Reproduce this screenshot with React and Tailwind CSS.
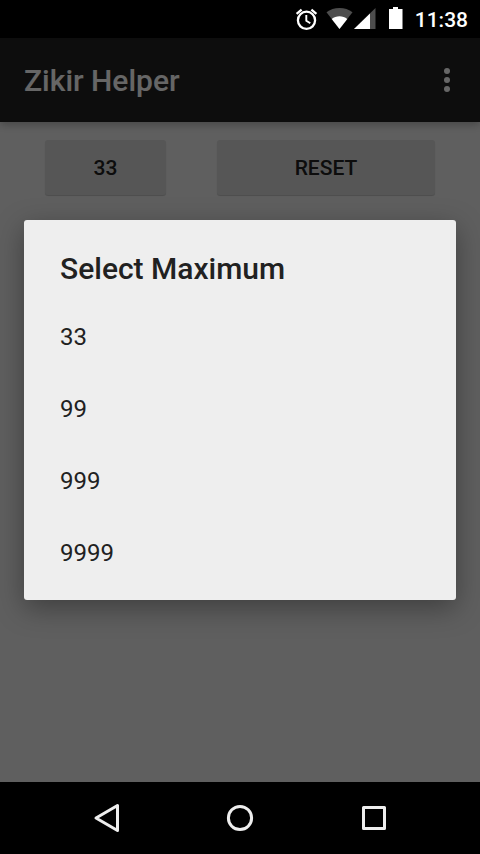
import { useState } from 'react';

const MAX_OPTIONS = [33, 99, 999, 9999];

function StatusBar() {
  return (
    <div className="flex h-[38px] shrink-0 items-center justify-end bg-black pr-3 text-white">
      {/* Alarm */}
      <svg className="mr-2 h-6 w-6" viewBox="0 0 24 24" fill="none" stroke="currentColor">
        <circle cx="12.5" cy="13.3" r="8.600" strokeWidth="2.300" />
        <path d="M12.300 8v5.700l4 2.500" strokeWidth="1.900" />
        <path d="M2.600 6.800l5-4.200M22.400 6.800l-5-4.200" strokeWidth="2.300" />
      </svg>
      {/* Wifi */}
      <svg className="h-6 w-[27px]" viewBox="0 0 27 24" fill="currentColor">
        <path d="M13.500 22L.5 5.300C4 2.500 8.600 1 13.500 1s9.500 1.500 13 4.300z" opacity="0.3" />
        <path d="M13.500 22L5.700 12C7.900 10.100 10.600 9.200 13.500 9.200s5.600.9 7.800 2.800z" />
      </svg>
      {/* Mobile signal */}
      <svg className="mr-3 ml-px h-6 w-[22px]" viewBox="0 0 22 24" fill="currentColor">
        <path d="M0 22L21.500 1v21z" opacity="0.3" />
        <path d="M0 22L16 6.400V22z" />
      </svg>
      {/* Battery */}
      <svg className="mr-3 h-6 w-[15px]" viewBox="0 0 15 24" fill="currentColor">
        <path d="M5 0h5v2h4.500v20H1V2h4z" />
      </svg>
      <span className="pt-0.5 text-[21px] leading-6 font-medium">11:38</span>
    </div>
  );
}

function AppBar() {
  return (
    <header className="z-0 flex h-[84px] shrink-0 items-center justify-between bg-[#212121] pr-[23px] pl-6 text-white shadow-[0_3px_8px_rgba(0,0,0,0.25)]">
      <h1 className="pt-0.5 text-[30px] leading-9 font-medium">Zikir Helper</h1>
      <button type="button" aria-label="More options">
        <svg className="h-6 w-5" viewBox="0 0 20 24" fill="currentColor">
          <circle cx="10" cy="3" r="3" />
          <circle cx="10" cy="12" r="3" />
          <circle cx="10" cy="21" r="3" />
        </svg>
      </button>
    </header>
  );
}

function MaximumDialog({ onSelect }) {
  return (
    <div className="absolute inset-0 flex items-center bg-black/60 px-6">
      <div
        role="dialog"
        aria-labelledby="maximum-title"
        className="w-full rounded-[3px] bg-[#eeeeee] pb-3 text-[#212121] shadow-[0_8px_28px_rgba(0,0,0,0.35)]"
      >
        <h2 id="maximum-title" className="px-9 pt-[31px] pb-[13px] text-[30px] leading-9 font-medium">
          Select Maximum
        </h2>
        <ul>
          {MAX_OPTIONS.map((option) => (
            <li key={option}>
              <button
                type="button"
                onClick={() => onSelect(option)}
                className="flex h-[72px] w-full items-center px-9 pt-0.5 text-2xl"
              >
                {option}
              </button>
            </li>
          ))}
        </ul>
      </div>
    </div>
  );
}

function NavigationBar() {
  return (
    <nav className="flex h-[72px] shrink-0 items-center justify-between bg-black px-[92px] text-[#eeeeee]">
      <button type="button" aria-label="Back">
        <svg className="h-[30px] w-[30px]" viewBox="0 0 30 30" fill="none" stroke="currentColor" strokeWidth="3" strokeLinejoin="round">
          <path d="M25.500 2.500v25L4 15z" />
        </svg>
      </button>
      <button type="button" aria-label="Home">
        <svg className="h-[30px] w-[30px]" viewBox="0 0 30 30" fill="none" stroke="currentColor" strokeWidth="3">
          <circle cx="15" cy="15" r="11.600" />
        </svg>
      </button>
      <button type="button" aria-label="Recent apps">
        <svg className="h-[30px] w-[30px]" viewBox="0 0 30 30" fill="none" stroke="currentColor" strokeWidth="3" strokeLinejoin="round">
          <path d="M5.500 4.500h21v21h-21z" />
        </svg>
      </button>
    </nav>
  );
}

export default function App() {
  const [maximum, setMaximum] = useState(33);
  const [dialogOpen, setDialogOpen] = useState(true);

  const handleSelect = (option) => {
    setMaximum(option);
    setDialogOpen(false);
  };

  return (
    <div className="flex min-h-screen flex-col bg-black font-['Roboto',sans-serif]">
      <StatusBar />

      <div className="relative flex flex-1 flex-col overflow-hidden bg-[#eeeeee]">
        <AppBar />
        <main className="flex gap-[51px] px-[45px] pt-[18px] text-[21px] font-medium text-[#212121]">
          <button
            type="button"
            onClick={() => setDialogOpen(true)}
            className="h-[55px] w-[121px] rounded-[3px] bg-[#d6d7d7] pt-0.5 shadow-[0_1px_1px_rgba(0,0,0,0.2)]"
          >
            {maximum}
          </button>
          <button
            type="button"
            className="h-[55px] flex-1 rounded-[3px] bg-[#d6d7d7] pt-0.5 shadow-[0_1px_1px_rgba(0,0,0,0.2)]"
          >
            RESET
          </button>
        </main>

        {dialogOpen && <MaximumDialog onSelect={handleSelect} />}
      </div>

      <NavigationBar />
    </div>
  );
}
